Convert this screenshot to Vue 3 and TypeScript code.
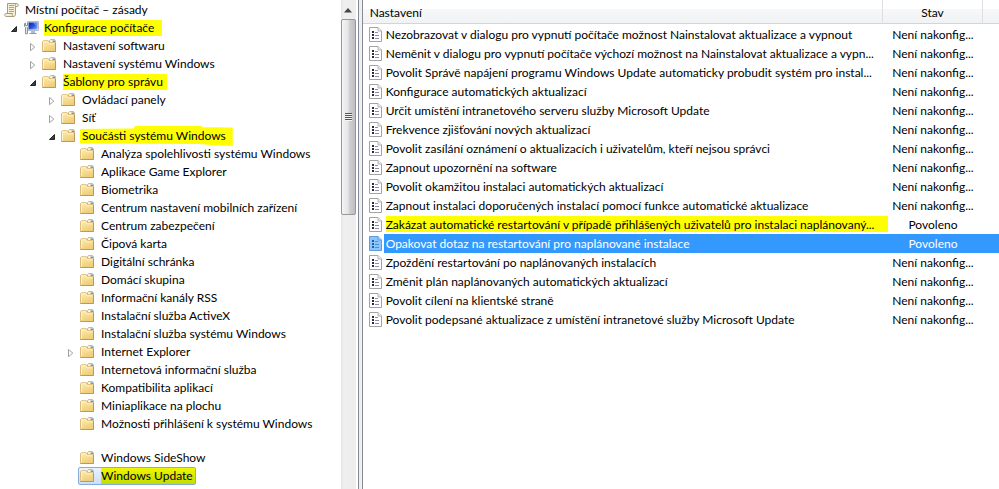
<script setup lang="ts">
import { ref } from 'vue'

type IconKind = 'scroll' | 'computer' | 'folder'

interface TreeNode {
  label: string
  level: number
  icon: IconKind
  expander?: 'open' | 'closed'
  mark?: 'tight' | 'loose' | 'brush'
  spaced?: boolean
}

interface Setting {
  name: string
  state: string
  marked?: boolean
}

const leaf = (label: string): TreeNode => ({ label, level: 4, icon: 'folder' })

const nodes: TreeNode[] = [
  { label: 'Místní počítač – zásady', level: 0, icon: 'scroll' },
  { label: 'Konfigurace počítače', level: 1, icon: 'computer', expander: 'open', mark: 'loose' },
  { label: 'Nastavení softwaru', level: 2, icon: 'folder', expander: 'closed' },
  { label: 'Nastavení systému Windows', level: 2, icon: 'folder', expander: 'closed' },
  { label: 'Šablony pro správu', level: 2, icon: 'folder', expander: 'open', mark: 'tight' },
  { label: 'Ovládací panely', level: 3, icon: 'folder', expander: 'closed' },
  { label: 'Síť', level: 3, icon: 'folder', expander: 'closed' },
  { label: 'Součásti systému Windows', level: 3, icon: 'folder', expander: 'open', mark: 'brush' },
  leaf('Analýza spolehlivosti systému Windows'),
  leaf('Aplikace Game Explorer'),
  leaf('Biometrika'),
  leaf('Centrum nastavení mobilních zařízení'),
  leaf('Centrum zabezpečení'),
  leaf('Čipová karta'),
  leaf('Digitální schránka'),
  leaf('Domácí skupina'),
  leaf('Informační kanály RSS'),
  leaf('Instalační služba ActiveX'),
  leaf('Instalační služba systému Windows'),
  { label: 'Internet Explorer', level: 4, icon: 'folder', expander: 'closed' },
  leaf('Internetová informační služba'),
  leaf('Kompatibilita aplikací'),
  leaf('Miniaplikace na plochu'),
  leaf('Možnosti přihlášení k systému Windows'),
  { label: 'Windows SideShow', level: 4, icon: 'folder', spaced: true },
  leaf('Windows Update'),
]

const unset = 'Není nakonfig...'
const settings: Setting[] = [
  { name: 'Nezobrazovat v dialogu pro vypnutí počítače možnost Nainstalovat aktualizace a vypnout', state: unset },
  { name: 'Neměnit v dialogu pro vypnutí počítače výchozí možnost na Nainstalovat aktualizace a vypn...', state: unset },
  { name: 'Povolit Správě napájení programu Windows Update automaticky probudit systém pro instal...', state: unset },
  { name: 'Konfigurace automatických aktualizací', state: unset },
  { name: 'Určit umístění intranetového serveru služby Microsoft Update', state: unset },
  { name: 'Frekvence zjišťování nových aktualizací', state: unset },
  { name: 'Povolit zasílání oznámení o aktualizacích i uživatelům, kteří nejsou správci', state: unset },
  { name: 'Zapnout upozornění na software', state: unset },
  { name: 'Povolit okamžitou instalaci automatických aktualizací', state: unset },
  { name: 'Zapnout instalaci doporučených instalací pomocí funkce automatické aktualizace', state: unset },
  { name: 'Zakázat automatické restartování v případě přihlášených uživatelů pro instalaci naplánovaný...', state: 'Povoleno', marked: true },
  { name: 'Opakovat dotaz na restartování pro naplánované instalace', state: 'Povoleno' },
  { name: 'Zpoždění restartování po naplánovaných instalacích', state: unset },
  { name: 'Změnit plán naplánovaných automatických aktualizací', state: unset },
  { name: 'Povolit cílení na klientské straně', state: unset },
  { name: 'Povolit podepsané aktualizace z umístění intranetové služby Microsoft Update', state: unset },
]

const currentNode = ref('Windows Update')
const currentSetting = ref(11)
</script>

<template>
  <div class="console">
    <svg class="defs" width="0" height="0" aria-hidden="true">
      <defs>
        <linearGradient id="folder-face" x1="0" y1="0" x2="0.4" y2="1">
          <stop offset="0" stop-color="#fdeeb5" />
          <stop offset="1" stop-color="#f0cd78" />
        </linearGradient>
        <linearGradient id="screen-face" x1="0" y1="0" x2="1" y2="1">
          <stop offset="0" stop-color="#0a1fa8" />
          <stop offset="0.5" stop-color="#2450dc" />
          <stop offset="1" stop-color="#8fb4f4" />
        </linearGradient>
      </defs>
    </svg>

    <nav class="tree-pane">
      <ul class="tree">
        <li
          v-for="node in nodes"
          :key="node.label"
          class="node"
          :class="[`level-${node.level}`, { spaced: node.spaced }]"
        >
          <span v-if="node.level > 0" class="expander">
            <button v-if="node.expander" type="button" :aria-label="node.label">
              <svg width="8" height="10" viewBox="0 0 8 10">
                <path v-if="node.expander === 'open'" d="M6.5 2.5v5h-5z" fill="#404040" stroke="#262626" />
                <path v-else d="M1.5 1.5v7.2L5.8 5.1z" fill="#fff" stroke="#a0a0a0" />
              </svg>
            </button>
          </span>
          <button
            type="button"
            class="item"
            :class="{ current: node.label === currentNode }"
            @click="currentNode = node.label"
          >
            <svg v-if="node.icon === 'folder'" class="icon" width="16" height="16" viewBox="0 0 16 16">
              <path d="M7.5 5V2.5l1-1h4l1 1V5z" fill="#f8e3a0" stroke="#d9b974" />
              <path d="M8.5 2.5H13v2H8.500z" fill="#fff" />
              <path d="M10.5 2.500H13V4h-2.500z" fill="#4a9be8" />
              <path d="M.5 13.5v-10l.8-.8h4.9l1.3 2h6v8.8z" fill="url(#folder-face)" stroke="#dcbc78" />
              <path d="M1.5 12.5v-8.7h4.2l1.4 2h5.4" fill="none" stroke="#fff3c9" />
              <path d="M.5 13.5h13V5" fill="none" stroke="#b99a5c" />
            </svg>
            <svg v-else-if="node.icon === 'scroll'" class="icon" width="16" height="16" viewBox="0 0 16 16">
              <path d="M3.5 1.5h9.2c1 0 1.6.8 1.6 1.7s-.6 1.4-1.4 1.4h-1.4v7.6c0 1.4-.7 2.3-1.9 2.3H2.2C1 14.5.7 13.5.7 12.8c0-.7.3-1.3 1.8-1.3h1z" fill="#f6eed6" stroke="#a79c80" />
              <path d="M11.5 4.6c-.8-1 0-2.9 1.2-3M2.5 11.5h6c-.6 1.2 0 2.8 1.1 3" fill="none" stroke="#a79c80" />
              <path d="M5 3.5h5M5 5.5h5M5 7.5h5M5 9.5h5" stroke="#a8a4a0" fill="none" />
            </svg>
            <svg v-else class="icon" width="16" height="16" viewBox="0 0 16 16">
              <path d="M4.5 1.5h11v9h-11z" fill="#e8ebf0" stroke="#b4bccb" />
              <path d="M5.5 2.5h9v7h-9z" fill="url(#screen-face)" />
              <path d="M10 2.5h4.5v5z" fill="#8fb0f2" opacity=".6" />
              <path d="M8 11h4v2H8z" fill="#b6bcc7" />
              <path d="M6.5 13.5h7" stroke="#8f97a5" />
              <path d="M1.5 3.5v3l1 1v6.3h2V7.5l1-1v-3l-1-.5v2.5h-2V3z" fill="#e4e7eb" stroke="#8a94a2" />
            </svg>
            <span class="label" :class="node.mark ? `mark-${node.mark}` : ''">{{ node.label }}</span>
          </button>
        </li>
      </ul>
    </nav>

    <div class="scrollbar">
      <button type="button" class="scroll-up" aria-label="Nahoru">
        <svg width="8" height="5" viewBox="0 0 8 5"><path d="M4 0l4 4.500H0z" fill="#444" /></svg>
      </button>
      <div class="thumb"><i /><i /><i /><i /></div>
    </div>
    <div class="splitter" />

    <main class="list-pane">
      <table class="settings">
        <colgroup>
          <col class="col-icon">
          <col>
          <col class="col-state">
          <col class="col-rest">
        </colgroup>
        <thead>
          <tr>
            <th colspan="2" class="head-name">Nastavení</th>
            <th class="head-state">Stav</th>
            <th class="head-rest" />
          </tr>
        </thead>
        <tbody>
          <tr
            v-for="(row, index) in settings"
            :key="row.name"
            :class="{ selected: index === currentSetting, marked: row.marked }"
            @click="currentSetting = index"
          >
            <td class="cell-icon">
              <svg width="13" height="15" viewBox="0 0 13 15">
                <path class="sheet" d="M.5.5H9L12.500 4v10.500H.5z" />
                <path class="fold" d="M9 .5V4h3.500" />
                <path class="bullets" d="M3 4h2v2H3zM3 7h2v2H3zM3 10h2v2H3z" />
                <path class="lines" d="M6 5.500h3M6 8.500h4M6 11.500h4" />
              </svg>
            </td>
            <td class="cell-name"><span>{{ row.name }}</span></td>
            <td class="cell-state">{{ row.state }}</td>
            <td />
          </tr>
        </tbody>
      </table>
    </main>
  </div>
</template>

<style>
body {
  background: #fff;
}
</style>

<style scoped>
.console {
  display: flex;
  min-height: 100vh;
  overflow: hidden;
  background: #fff;
  color: #000;
  font-family: Lato, "Open Sans", sans-serif;
  font-size: 12px;
  line-height: 18px;
}

.defs {
  position: absolute;
}

button {
  margin: 0;
  padding: 0;
  border: 0;
  background: none;
  color: inherit;
  font: inherit;
}

.tree-pane {
  flex: 0 0 34.1%;
  min-width: 0;
  overflow: hidden;
}

.tree {
  margin: 0;
  padding: 1px 0 0;
  list-style: none;
}

.node {
  display: flex;
  height: 18px;
  white-space: nowrap;
}

.level-0 { padding-left: 2px; }
.level-1 { padding-left: 4px; }
.level-2 { padding-left: 23px; }
.level-3 { padding-left: 42px; }
.level-4 { padding-left: 61px; }

.spaced {
  margin-top: 16px;
}

.expander {
  display: flex;
  align-items: center;
  flex: 0 0 17px;
  padding-left: 6px;
  padding-top: 2px;
  box-sizing: border-box;
}

.expander button,
.item {
  display: flex;
  align-items: center;
}

.item {
  gap: 5px;
  height: 18px;
  padding: 0 3px 0 1px;
  border: 1px solid transparent;
  border-radius: 2px;
  box-sizing: border-box;
}

.item.current {
  border-color: #84acdd;
  background: linear-gradient(#eaf2fd, #c9dffb);
  padding-right: 0;
}

.item.current .label {
  height: 16px;
  line-height: 16px;
  padding-right: 2px;
  background: linear-gradient(#eef500, #c2dc00);
}

.icon {
  flex: none;
}

.label {
  position: relative;
  z-index: 0;
}

.mark-loose,
.mark-tight {
  height: 16px;
  line-height: 16px;
  background: #ff0;
}

.mark-loose { padding-right: 8px; }
.mark-tight { padding-right: 4px; }

.mark-brush::before {
  content: "";
  position: absolute;
  inset: -1px -7px -1px -2px;
  z-index: -1;
  background: #ff0;
  clip-path: polygon(0 15%, 35% 12%, 36% 0, 80% 0, 80% 6%, 100% 8%, 100% 100%, 88% 96%, 78% 90%, 0 88%);
}

.scrollbar {
  flex: 0 0 15px;
  display: flex;
  flex-direction: column;
  padding: 1px 0 0;
  background: linear-gradient(90deg, #e6e6e6, #efefef 20%, #ededed);
}

.scroll-up {
  display: flex;
  justify-content: center;
  align-items: center;
  height: 18px;
}

.thumb {
  display: flex;
  flex-direction: column;
  align-items: center;
  justify-content: center;
  height: 40vh;
  box-sizing: border-box;
  border: 1px solid #979797;
  border-radius: 2px;
  background: linear-gradient(90deg, #f4f4f4, #e6e6e8 45%, #cfcfd3 60%, #bcbcc2);
}

.thumb i {
  width: 7px;
  height: 1px;
  background: #555;
  border-bottom: 1px solid #f4f4f4;
  box-sizing: content-box;
}

.splitter {
  flex: 0 0 3px;
  margin-left: 2px;
  border: solid #858995;
  border-width: 0 1px;
  background: #f0f0f0;
}

.list-pane {
  flex: 1;
  min-width: 0;
}

.settings {
  width: 100%;
  table-layout: fixed;
  border-collapse: separate;
  border-spacing: 0;
}

.col-icon { width: 21px; }
.col-state { width: 100px; }
.col-rest { width: 16px; }

th {
  height: 21px;
  padding: 2px 0 0;
  border-bottom: 1px solid #d5d5d5;
  background: linear-gradient(#fff 0 40%, #f7f8fa 40%, #f1f2f4);
  font-weight: 400;
  line-height: 21px;
  box-sizing: content-box;
}

.head-name {
  padding-left: 7px;
  text-align: left;
}

.head-name,
.head-state {
  border-right: 1px solid #dfdfe2;
}

td {
  height: 19px;
  padding: 0;
  line-height: 19px;
  white-space: nowrap;
}

tbody::before {
  content: "";
  display: block;
  height: 1px;
}

.cell-icon {
  padding-left: 6px;
}

.cell-icon svg {
  display: block;
}

.cell-name {
  padding-left: 2px;
}

.cell-name span {
  display: inline-block;
  vertical-align: top;
}

.cell-state {
  text-align: center;
}

.marked .cell-name span {
  padding-right: 14px;
  background: linear-gradient(#ff0, #ff0) 0 1px / 100% 16px no-repeat;
}

.selected td:not(.cell-icon) {
  background: #39f;
  color: #fff;
}

.sheet {
  fill: #fff;
  stroke: #a3a3a3;
}

.fold {
  fill: #eee;
  stroke: #b5b5b5;
}

.bullets {
  fill: #2a2a3c;
}

.lines {
  fill: none;
  stroke: #8c8cae;
}

.selected .sheet {
  fill: #8fc5ff;
  stroke: #5b9ee0;
}

.selected .fold {
  fill: #b3d8ff;
  stroke: #5b9ee0;
}

.selected .bullets {
  fill: #1c5fa8;
}

.selected .lines {
  stroke: #4a8fd8;
}
</style>
